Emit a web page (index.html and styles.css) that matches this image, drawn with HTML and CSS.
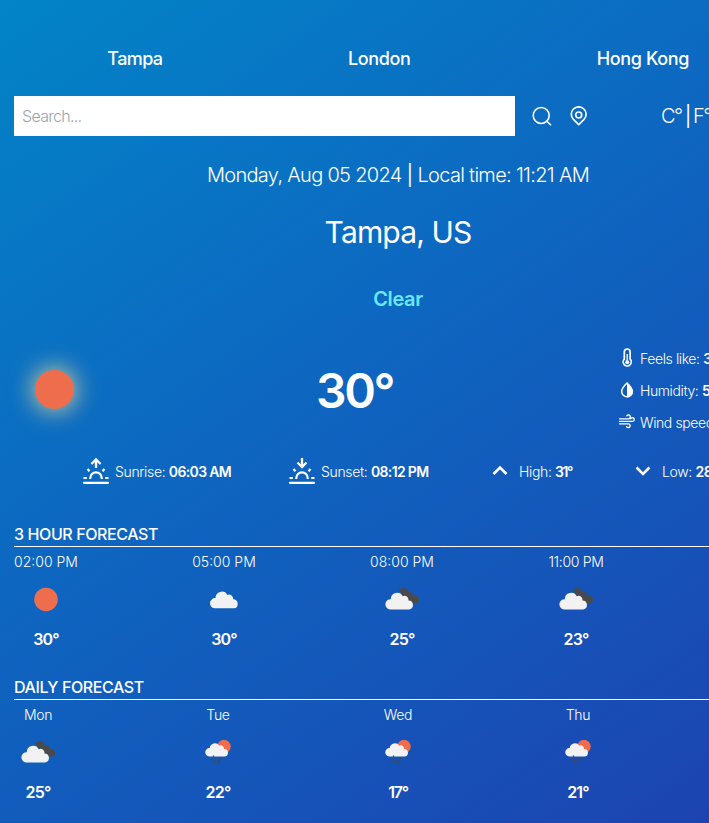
FILE: index.html
```html
<!DOCTYPE html>
<html lang="en">
<head>
<meta charset="utf-8">
<title>Weather</title>
<link rel="stylesheet" href="styles.css">
</head>
<body>
<svg class="defs" aria-hidden="true">
  <symbol id="cloud" viewBox="0 0 30 19"><path fill="#f2f2f2" d="M5.200 19A5.100 5.100 0 0 1 5.800 8.600 6.300 6.300 0 0 1 17.700 5.600 4 4 0 0 1 23.500 9.700 4.700 4.700 0 0 1 24.300 19Z"/></symbol>
  <symbol id="broken" viewBox="0 0 35 22"><path fill="#4a4a4c" d="M14 2.500A5.500 5.500 0 0 1 24 4.500 4.200 4.200 0 0 1 29.500 8 3.800 3.800 0 0 1 31 15.500H24Z"/><path fill="#f2f2f2" d="M5.200 21.500A5.100 5.100 0 0 1 5.800 11.300 6.300 6.300 0 0 1 17.700 8.300 4 4 0 0 1 23.500 12.400 4.600 4.600 0 0 1 24.300 21.500Z"/></symbol>
  <symbol id="rain" viewBox="0 0 26 26"><circle cx="19" cy="7.500" r="6.700" fill="#ee6d4d"/><path fill="#f2f2f2" d="M4.200 17.500A4.200 4.200 0 0 1 4.700 9.100 5.200 5.200 0 0 1 14.300 6.700 3.300 3.300 0 0 1 19 10 3.800 3.800 0 0 1 20 17.500Z"/><path stroke="#48484c" stroke-width="1.300" stroke-linecap="round" d="M8.500 17v.6M7.500 20.200l-.8 1.300M11 20.200l-.8 1.300M15.500 18.800l-.5 1M14.300 21.500l-.3.600M9.800 23.700l-.5.600M13.600 23.800l-.5.600"/></symbol>
  <symbol id="horizon" viewBox="0 0 28 28"><g fill="none" stroke="#fff" stroke-width="2.200"><path stroke-linecap="round" d="M2 25.800h24"/><path d="M8.300 22v-1a5.700 5.700 0 0 1 11.400 0v1"/><path d="M1.500 21h3.300M23.200 21h3.300M5.500 12l2 2.200M22.500 12l-2 2.200"/></g></symbol>
</svg>
<main class="app">
  <nav class="cities"><button class="tampa">Tampa</button><button class="london">London</button><button class="hongkong">Hong Kong</button></nav>
  <div class="tools">
    <input class="search" type="text" placeholder="Search...">
    <svg class="tool" viewBox="0 0 20 20" fill="none" stroke="#fff" stroke-width="1.600" stroke-linecap="round"><circle cx="9.200" cy="9.500" r="8"/><path d="M15 15.200l3.500 3.600"/></svg>
    <svg class="tool pin" viewBox="0 0 20 20" fill="none" stroke="#fff" stroke-width="1.700" stroke-linejoin="round"><path d="M9.700 18.700 4.400 13.400a7.400 7.400 0 1 1 10.600 0Z"/><circle cx="9.700" cy="9" r="3"/></svg>
    <div class="units">C° <b>|</b> F°</div>
  </div>
  <p class="date">Monday, Aug 05 2024 <b>|</b> Local time: 11:21 AM</p>
  <h1 class="place">Tampa, US</h1>
  <p class="condition">Clear</p>
  <section class="current">
    <div class="sun"></div>
    <p class="temp">30°</p>
    <ul class="details">
      <li><svg viewBox="0 0 18 20" fill="none" stroke="#fff" stroke-width="1.700"><path d="M6.300 11.200V3.900a2.900 2.900 0 0 1 5.800 0v7.300a4 4 0 1 1-5.800 0Z"/><path stroke-width="1.300" d="M9.200 6v8"/><circle cx="9.200" cy="14.200" r="2" fill="#fff" stroke="none"/></svg><span>Feels like: <b>32°</b></span></li>
      <li><svg viewBox="0 0 18 20"><path fill="none" stroke="#fff" stroke-width="1.500" d="M9 3Q3.700 8 3.700 11.500a5.300 5.300 0 0 0 10.600 0Q14.300 8 9 3Z"/><path fill="#fff" d="M9 2.500Q14.800 8 14.800 11.500A5.600 5.600 0 0 1 9 17.400Z"/></svg><span>Humidity: <b>56%</b></span></li>
      <li><svg viewBox="0 0 18 20" fill="none" stroke="#fff" stroke-width="1.350" stroke-linecap="round"><path d="M1.500 6.800h9a1.900 1.900 0 1 0-1.700-2.900M1.500 9.300h13a1.800 1.800 0 1 0-1.700-2.500M1.500 11.800h8.800a1.900 1.900 0 1 1-1.700 2.800"/></svg><span>Wind speed: <b>4 km/h</b></span></li>
    </ul>
  </section>
  <section class="facts">
    <div class="fact sunrise"><svg viewBox="0 0 28 28"><use href="#horizon"/><path d="M14 11V3m-4.500 4L14 2.500 18.500 7" fill="none" stroke="#fff" stroke-width="2.300"/></svg><span>Sunrise: <b>06:03 AM</b></span></div>
    <div class="fact sunset"><svg viewBox="0 0 28 28"><use href="#horizon"/><path d="M14 1v8M9.500 5.500 14 10l4.500-4.500" fill="none" stroke="#fff" stroke-width="2.300"/></svg><span>Sunset: <b>08:12 PM</b></span></div>
    <div class="fact high"><svg viewBox="0 0 28 28"><path d="m7.500 17 6.500-6.500 6.500 6.500" fill="none" stroke="#fff" stroke-width="2.600"/></svg><span>High: <b>31°</b></span></div>
    <div class="fact low"><svg viewBox="0 0 28 28"><path d="m7.500 10.500 6.500 6.500 6.500-6.500" fill="none" stroke="#fff" stroke-width="2.600"/></svg><span>Low: <b>28°</b></span></div>
  </section>
  <section class="forecast hourly">
    <h2>3 HOUR FORECAST</h2>
    <div class="row">
      <div class="slot"><p>02:00 PM</p><svg viewBox="0 0 48 48"><circle cx="24" cy="24.500" r="11.800" fill="#ee6d4d"/></svg><b>30°</b></div>
      <div class="slot"><p>05:00 PM</p><svg viewBox="0 0 48 48"><use href="#cloud" x="9.700" y="14.500" width="30" height="19"/></svg><b>30°</b></div>
      <div class="slot"><p>08:00 PM</p><svg viewBox="0 0 48 48"><use href="#broken" x="7" y="13" width="35" height="22"/></svg><b>25°</b></div>
      <div class="slot eleven"><p>11:00 PM</p><svg viewBox="0 0 48 48"><use href="#broken" x="7" y="13" width="35" height="22"/></svg><b>23°</b></div>
    </div>
  </section>
  <section class="forecast daily">
    <h2>DAILY FORECAST</h2>
    <div class="row">
      <div class="slot"><p>Mon</p><svg viewBox="0 0 48 48"><use href="#broken" x="7" y="13" width="35" height="22"/></svg><b>25°</b></div>
      <div class="slot"><p>Tue</p><svg viewBox="0 0 48 48"><use href="#rain" x="11" y="11" width="26" height="26"/></svg><b>22°</b></div>
      <div class="slot"><p>Wed</p><svg viewBox="0 0 48 48"><use href="#rain" x="11" y="11" width="26" height="26"/></svg><b class="narrow">17°</b></div>
      <div class="slot"><p>Thu</p><svg viewBox="0 0 48 48"><use href="#rain" x="11" y="11" width="26" height="26"/></svg><b>21°</b></div>
    </div>
  </section>
</main>
</body>
</html>
```
FILE: styles.css
```css
* { box-sizing: border-box; margin: 0; padding: 0; }
html { overflow: hidden; height: 100%; }
body {
  height: 823px;
  overflow: hidden;
  font-family: Inter, "Liberation Sans", sans-serif;
  color: #fff;
}
svg { display: block; flex: none; }
.defs { width: 0; height: 0; position: absolute; }
.app {
  width: 796px;
  height: 840px;
  padding: 45px 14px 0;
  background: linear-gradient(145deg, #0284c7, #0e65c0 45%, #1e40af);
  white-space: nowrap;
}
.cities { display: flex; justify-content: space-around; height: 28px; }
.cities button {
  border: 0; background: none; color: inherit;
  font: 500 18px/28px Inter, sans-serif; letter-spacing: -.35px;
}
.tampa { width: 54px; }
.cities .tampa { letter-spacing: -.6px; }
.london { width: 62px; }
.hongkong { width: 92px; }
.tools { display: flex; align-items: center; height: 40px; margin-top: 23px; }
.search {
  width: 501px; height: 40px; padding: 0 8px; border: 0; background: #fff;
  font: 300 16px Inter, sans-serif; letter-spacing: -.7px;
}
.search::placeholder { color: #9ca3af; }
.tool { width: 20px; height: 20px; margin-left: 17px; }
.units { margin-left: 72px; font-weight: 300; font-size: 20px; letter-spacing: -1.5px; word-spacing: -1px; }
.units b { font-weight: 400; }
.date {
  height: 28px; margin-top: 25px; text-align: center;
  font-size: 20px; line-height: 28px; font-weight: 300; letter-spacing: -.69px;
}
.date b { font-weight: 400; }
.place { margin-top: 25px; text-align: center; font-size: 30px; line-height: 36px; font-weight: 400; letter-spacing: -.85px; }
.condition { margin-top: 35px; text-align: center; font-size: 20px; line-height: 28px; font-weight: 600; letter-spacing: -.4px; color: #67e8f9; }
.current { display: grid; grid-template-columns: 302px 302px 164px; align-items: center; height: 96px; margin-top: 29px; }
.sun {
  width: 39px; height: 39px; margin-left: 21px; margin-top: -1px; border-radius: 50%;
  background: #ee6d4d; box-shadow: 0 0 24px 2px rgba(255, 226, 150, .8);
}
.temp { font-size: 48px; font-weight: 600; letter-spacing: -2.3px; }
.details { list-style: none; }
.details li { display: flex; align-items: center; height: 32px; font-size: 14px; font-weight: 300; letter-spacing: -.4px; }
.details svg { width: 18px; height: 20px; margin-right: 4px; }
b { font-weight: 600; }
.facts { display: flex; height: 28px; margin-top: 19px; font-size: 14px; font-weight: 300; letter-spacing: -.35px; }
.fact { display: flex; align-items: center; }
.fact svg { width: 28px; height: 28px; margin-right: 5px; }
.sunrise { width: 206px; margin-left: 68px; }
.sunset { width: 198px; }
.sunrise b, .sunset b { letter-spacing: -.65px; }
.high { width: 143px; }
.high b { letter-spacing: -1.5px; }
.forecast h2 { height: 25px; border-bottom: 1px solid #fff; font-size: 16px; line-height: 24px; font-weight: 500; letter-spacing: -.4px; }
.hourly { margin-top: 37px; }
.daily { margin-top: 24px; }
.row { display: flex; gap: 114px; padding-top: 5px; }
.slot { display: flex; flex-direction: column; align-items: center; width: 64px; font-size: 16px; }
.slot p { font-size: 14px; line-height: 20px; font-weight: 300; letter-spacing: 0; }
.slot svg { width: 48px; height: 48px; margin: 3px 0 4px; }
.slot b { line-height: 24px; font-weight: 600; letter-spacing: -.8px; }
.slot .narrow { letter-spacing: -1.2px; }
.eleven { width: 56px; }
.eleven p { letter-spacing: -.3px; }
.daily .row { gap: 132px; }
.daily .slot { width: 48px; }
.daily .slot p { letter-spacing: -.3px; }
```
